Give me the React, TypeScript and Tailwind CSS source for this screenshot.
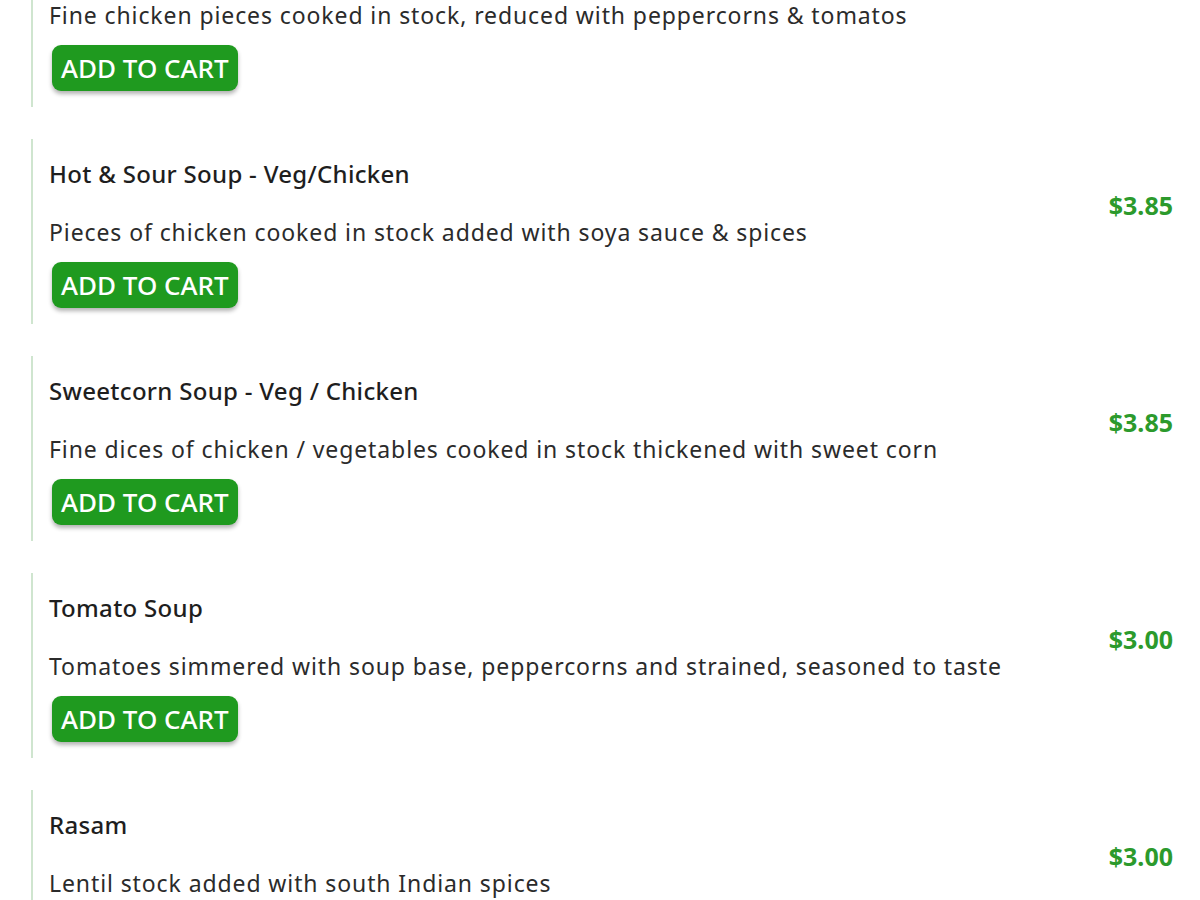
import React from 'react';

type Dish = { name: string; desc: string; price: string };

const dishes: Dish[] = [
  { name: 'Chicken Pepper Soup', desc: 'Fine chicken pieces cooked in stock, reduced with peppercorns & tomatos', price: '$3.85' },
  { name: 'Hot & Sour Soup - Veg/Chicken', desc: 'Pieces of chicken cooked in stock added with soya sauce & spices', price: '$3.85' },
  { name: 'Sweetcorn Soup - Veg / Chicken', desc: 'Fine dices of chicken / vegetables cooked in stock thickened with sweet corn', price: '$3.85' },
  { name: 'Tomato Soup', desc: 'Tomatoes simmered with soup base, peppercorns and strained, seasoned to taste', price: '$3.00' },
  { name: 'Rasam', desc: 'Lentil stock added with south Indian spices', price: '$3.00' },
];

const MenuItem = ({ dish }: { dish: Dish }) => (
  <div className="flex items-center border-l-2 border-[#cfe5cf] pl-[16px] pt-[20px] pb-[16px]">
    <div className="flex-1 flex flex-col items-start">
      <h3 className="text-[24px] leading-[30px] font-medium tracking-[0.3px] text-[#1e1e1e]">{dish.name}</h3>
      <p className="mt-[28px] text-[23px] leading-[30px] tracking-[0.9px] text-[#2b2b2b]">{dish.desc}</p>
      <button className="mt-[15px] ml-[3px] h-[46px] px-[9px] rounded-[9px] bg-[#1f9a1f] text-white text-[26px] font-medium uppercase shadow-[0_3px_4px_rgba(0,0,0,0.3)]">
        Add to cart
      </button>
    </div>
    <div className="text-[25px] font-bold text-[#2c9a2c] mb-[56px]">{dish.price}</div>
  </div>
);

export default function App() {
  return (
    <div className="h-[900px] overflow-hidden bg-white font-['Noto_Sans',sans-serif]">
      <div className="mt-[-78px] pl-[31px] pr-[27px] flex flex-col gap-[32px]">
        {dishes.map((d) => (
          <MenuItem key={d.name} dish={d} />
        ))}
      </div>
    </div>
  );
}
